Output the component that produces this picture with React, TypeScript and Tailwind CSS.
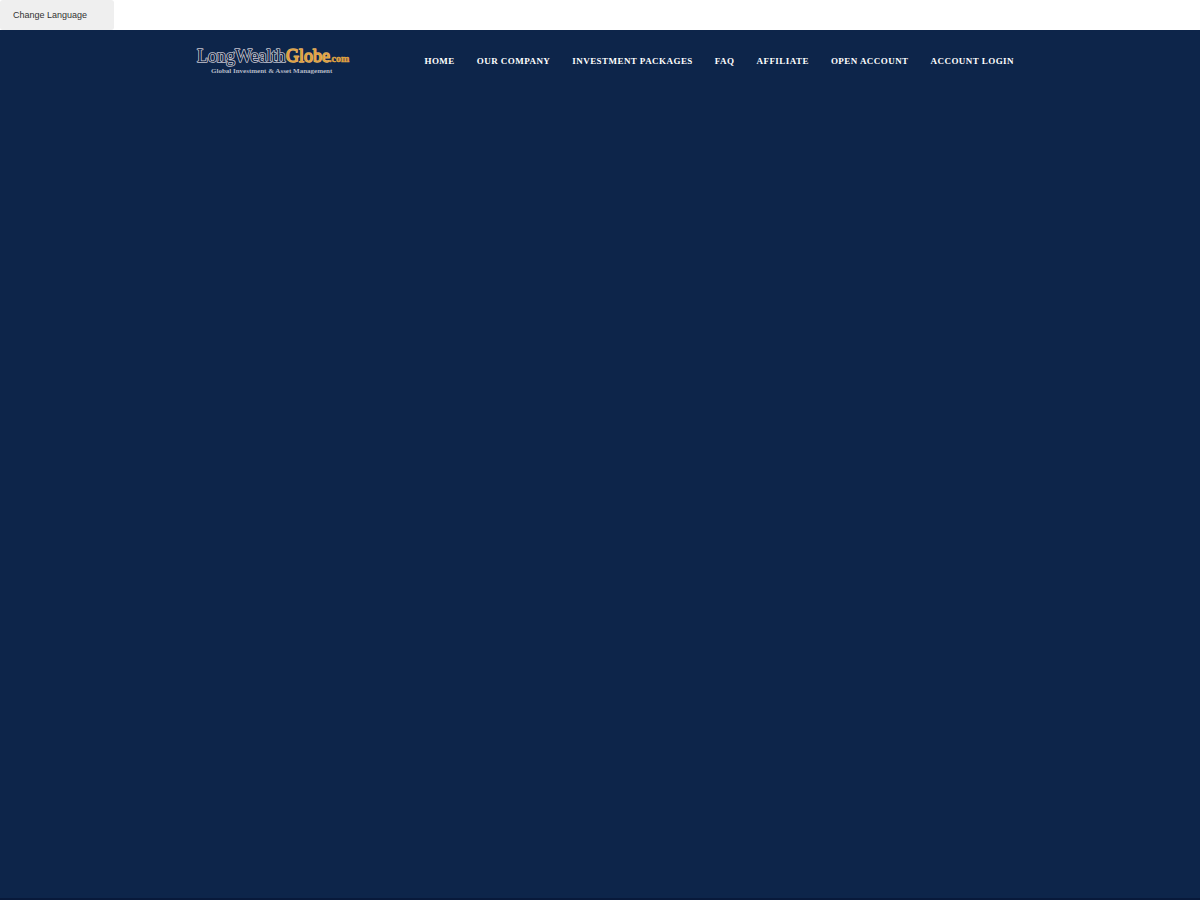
const links = [
  'Home',
  'Our Company',
  'Investment Packages',
  'FAQ',
  'Affiliate',
  'Open Account',
  'Account Login',
];

function Logo() {
  return (
    <svg
      viewBox="0 0 156 32"
      className="h-8 w-39 shrink-0 font-['Liberation_Serif',serif]"
      role="img"
      aria-label="LongWealthGlobe.com"
    >
      <g strokeLinejoin="round" paintOrder="stroke">
        <text x="1" y="16" fontSize="18" fill="#0d1f42" stroke="#c3c3cf" strokeWidth="1.6">
          LongWealth
        </text>
        <text x="90" y="16" fontSize="18" fill="#e2a03a" stroke="#e0b268" strokeWidth="1.4">
          Globe
        </text>
        <text x="133" y="16" fontSize="10" fontWeight="bold" fill="#e2a03a" stroke="#d9a95c" strokeWidth="0.5">
          .com
        </text>
      </g>
      <text x="15" y="27" fontSize="7" fontWeight="bold" fill="#b4bac8">
        Global Investment &amp; Asset Management
      </text>
    </svg>
  );
}

export default function App() {
  return (
    <div className="flex min-h-screen flex-col bg-white">
      <div className="flex">
        <button
          type="button"
          className="h-[30px] rounded-[3px] bg-[#efefef] pt-0.5 pr-[27px] pl-[13px] text-left font-['Liberation_Sans',sans-serif] text-[9px] text-[#333333]"
        >
          Change Language
        </button>
      </div>
      <div className="flex grow flex-col border-b-2 border-[#08193a] bg-[#0d254a]">
        <header className="mx-auto flex h-16 w-full max-w-[828px] items-center justify-between pl-2.5">
          <a href="#home">
            <Logo />
          </a>
          <nav className="flex gap-[22px] font-['Liberation_Serif',serif] text-[9px] font-bold tracking-wider whitespace-nowrap text-white uppercase">
            {links.map((label) => (
              <a key={label} href="#">
                {label}
              </a>
            ))}
          </nav>
        </header>
      </div>
    </div>
  );
}
